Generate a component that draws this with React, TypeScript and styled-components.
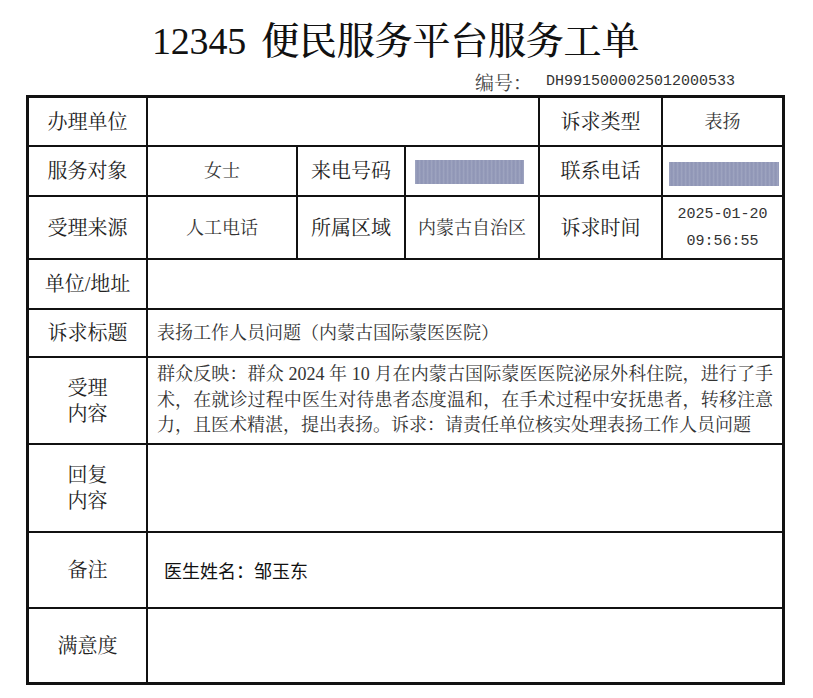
import React from "react";
import styled, { createGlobalStyle } from "styled-components";

const SERIF = `"Liberation Serif", "Noto Serif CJK SC", "Noto Sans CJK SC", serif`;
const SANS = `"Noto Sans CJK SC", "Noto Sans", sans-serif`;
const MONO = `"Liberation Mono", "Noto Sans CJK SC", monospace`;

const Global = createGlobalStyle`
  html, body { margin: 0; padding: 0; background: #ffffff; }
  body { font-family: ${SERIF}; color: #222; }
`;

const Page = styled.div`
  width: 813px;
  height: 698px;
  box-sizing: border-box;
  background: #fff;
  padding-top: 18px;
  overflow: hidden;
`;

const Title = styled.h1`
  margin: 0;
  padding-left: 152px;
  font-family: ${SERIF};
  font-size: 38px;
  line-height: 46px;
  font-weight: 500;
  color: #111;
  white-space: nowrap;
  letter-spacing: -0.2px;
`;

const TitleNum = styled.span`
  margin-right: 0.4em;
`;

const Meta = styled.div`
  margin-top: 7px;
  display: flex;
  justify-content: flex-end;
  align-items: center;
  padding-right: 78px;
  height: 20px;
  color: #444;
`;

const MetaLabel = styled.span`
  font-family: ${SERIF};
  font-size: 19px;
  margin-right: 14px;
`;

const MetaCode = styled.span`
  font-family: ${MONO};
  font-size: 15px;
  color: #333;
`;

const Table = styled.div`
  margin: 4px 0 0 26px;
  width: 759px;
  box-sizing: border-box;
  border: 3px solid #111;
  background: #111;
  display: grid;
  grid-template-columns: 117px 148px 106px 132px 121px 119px;
  grid-template-rows: 47px 48px 61px 48px 46px 85px 86px 74px 73px;
  gap: 2px;
`;

const Cell = styled.div<{ $span?: number; $align?: "center" | "left"; $pad?: number }>`
  background: #fff;
  grid-column: span ${(p) => p.$span ?? 1};
  display: flex;
  flex-direction: column;
  justify-content: center;
  align-items: ${(p) => (p.$align === "left" ? "flex-start" : "center")};
  padding-left: ${(p) => p.$pad ?? 0}px;
  padding-right: ${(p) => (p.$align === "left" ? 9 : 0)}px;
  box-sizing: border-box;
  min-width: 0;
`;

const Label = styled.span`
  font-family: ${SERIF};
  font-size: 20px;
  line-height: 26px;
  color: #222;
  text-align: center;
  white-space: nowrap;
`;

const Value = styled.span`
  font-family: ${SERIF};
  font-size: 18px;
  line-height: 24px;
  color: #333;
  white-space: nowrap;
`;

const TimeLine = styled.span`
  font-family: ${MONO};
  font-size: 15px;
  line-height: 27px;
  color: #333;
`;

const Redacted = styled.div<{ $w: number; $dx: number; $dy: number }>`
  width: ${(p) => p.$w}px;
  height: 24px;
  margin-top: ${(p) => p.$dy}px;
  margin-left: ${(p) => p.$dx}px;
  background-color: #959bba;
  background-image: repeating-linear-gradient(
    90deg,
    rgba(255, 255, 255, 0.08) 0px,
    rgba(255, 255, 255, 0.08) 1px,
    rgba(80, 90, 130, 0.1) 2px,
    rgba(255, 255, 255, 0) 4px
  );
`;

const Paragraph = styled.div`
  width: 100%;
  font-family: ${SERIF};
  font-size: 18px;
  line-height: 25.5px;
  color: #333;
`;

const JustLine = styled.div<{ $last?: boolean }>`
  text-align: ${(p) => (p.$last ? "left" : "justify")};
  text-align-last: ${(p) => (p.$last ? "left" : "justify")};
  white-space: nowrap;
`;

const Note = styled.span`
  font-family: ${SANS};
  font-size: 18px;
  line-height: 24px;
  color: #111;
`;

export default function App() {
  return (
    <>
      <Global />
      <Page>
        <Title>
          <TitleNum>12345</TitleNum>便民服务平台服务工单
        </Title>
        <Meta>
          <MetaLabel>编号：</MetaLabel>
          <MetaCode>DH9915000025012000533</MetaCode>
        </Meta>
        <Table>
          <Cell><Label>办理单位</Label></Cell>
          <Cell $span={3} />
          <Cell><Label>诉求类型</Label></Cell>
          <Cell><Value>表扬</Value></Cell>

          <Cell><Label>服务对象</Label></Cell>
          <Cell><Value>女士</Value></Cell>
          <Cell><Label>来电号码</Label></Cell>
          <Cell><Redacted $w={109} $dx={-6} $dy={2} /></Cell>
          <Cell><Label>联系电话</Label></Cell>
          <Cell><Redacted $w={110} $dx={2} $dy={6} /></Cell>

          <Cell><Label>受理来源</Label></Cell>
          <Cell><Value>人工电话</Value></Cell>
          <Cell><Label>所属区域</Label></Cell>
          <Cell><Value>内蒙古自治区</Value></Cell>
          <Cell><Label>诉求时间</Label></Cell>
          <Cell>
            <TimeLine>2025-01-20</TimeLine>
            <TimeLine>09:56:55</TimeLine>
          </Cell>

          <Cell><Label>单位/地址</Label></Cell>
          <Cell $span={5} />

          <Cell><Label>诉求标题</Label></Cell>
          <Cell $span={5} $align="left" $pad={9}>
            <Value>表扬工作人员问题（内蒙古国际蒙医医院）</Value>
          </Cell>

          <Cell><Label>受理<br />内容</Label></Cell>
          <Cell $span={5} $align="left" $pad={9}>
            <Paragraph>
              <JustLine>群众反映：群众 2024 年 10 月在内蒙古国际蒙医医院泌尿外科住院，进行了手</JustLine>
              <JustLine>术，在就诊过程中医生对待患者态度温和，在手术过程中安抚患者，转移注意</JustLine>
              <JustLine $last>力，且医术精湛，提出表扬。诉求：请责任单位核实处理表扬工作人员问题</JustLine>
            </Paragraph>
          </Cell>

          <Cell><Label>回复<br />内容</Label></Cell>
          <Cell $span={5} />

          <Cell><Label>备注</Label></Cell>
          <Cell $span={5} $align="left" $pad={16}>
            <Note>医生姓名：邹玉东</Note>
          </Cell>

          <Cell><Label>满意度</Label></Cell>
          <Cell $span={5} />
        </Table>
      </Page>
    </>
  );
}
